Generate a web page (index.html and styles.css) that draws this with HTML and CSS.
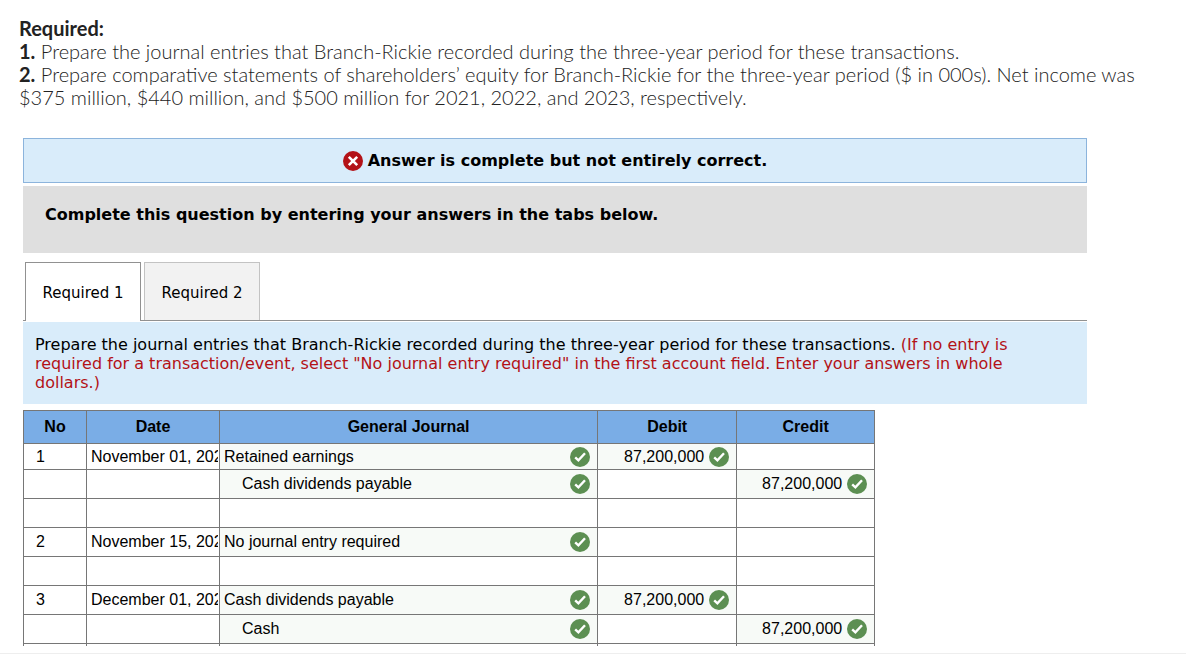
FILE: index.html
```html
<!DOCTYPE html>
<html lang="en">
  <head>
    <meta charset="UTF-8" />
    <meta name="viewport" content="width=device-width, initial-scale=1.0" />
    <title>Journal Entries</title>
    <link rel="stylesheet" href="styles.css">
  </head>
  <body>
    <svg class="symbols" aria-hidden="true">
      <symbol id="check" viewBox="0 0 20 20">
        <circle cx="10" cy="10" r="10" fill="#5c8f52" />
        <path d="M5.2 10.3 L8.4 13.3 L15 6.2" fill="none" stroke="#fff" stroke-width="2.4" />
      </symbol>
      <symbol id="cross" viewBox="0 0 20 20">
        <circle cx="10" cy="10" r="10" fill="#b31217" />
        <path d="M5.8 5.8 L14.2 14.2 M14.2 5.8 L5.8 14.2" fill="none" stroke="#fff" stroke-width="2.6" />
      </symbol>
    </svg>
    <div class="question">
      <div><b>Required:</b></div>
      <div><b>1.</b> Prepare the journal entries that Branch-Rickie recorded during the three-year period for these transactions.</div>
      <div><b>2.</b> Prepare comparative statements of shareholders’ equity for Branch-Rickie for the three-year period ($ in 000s). Net income was $375 million, $440 million, and $500 million for 2021, 2022, and 2023, respectively.</div>
    </div>
    <div class="answer">
      <div class="status">
        <svg class="icon"><use href="#cross" /></svg>
        <span>Answer is complete but not entirely correct.</span>
      </div>
      <div class="instruction">Complete this question by entering your answers in the tabs below.</div>
      <div class="tabs" role="tablist">
        <button type="button" role="tab" aria-selected="true" class="tab active">Required 1</button>
        <button type="button" role="tab" aria-selected="false" class="tab">Required 2</button>
      </div>
      <div class="prompt">
        Prepare the journal entries that Branch-Rickie recorded during the three-year period for these transactions.
        <span class="note">(If no entry is required for a transaction/event, select "No journal entry required" in the first account field. Enter your answers in whole dollars.)</span>
      </div>
      <table class="journal">
        <colgroup>
          <col class="col-no" />
          <col class="col-date" />
          <col />
          <col class="col-debit" />
          <col class="col-credit" />
        </colgroup>
        <thead>
          <tr>
            <th>No</th>
            <th>Date</th>
            <th>General Journal</th>
            <th>Debit</th>
            <th>Credit</th>
          </tr>
        </thead>
        <tbody>
          <tr class="first">
            <td class="no">1</td>
            <td class="date"><div>November 01, 2021</div></td>
            <td class="filled"><div class="entry"><span>Retained earnings</span><svg class="icon"><use href="#check" /></svg></div></td>
            <td class="filled"><div class="amount"><span>87,200,000</span><svg class="icon"><use href="#check" /></svg></div></td>
            <td></td>
          </tr>
          <tr>
            <td></td>
            <td></td>
            <td class="filled"><div class="entry indent"><span>Cash dividends payable</span><svg class="icon"><use href="#check" /></svg></div></td>
            <td></td>
            <td class="filled"><div class="amount"><span>87,200,000</span><svg class="icon"><use href="#check" /></svg></div></td>
          </tr>
          <tr>
            <td></td>
            <td></td>
            <td></td>
            <td></td>
            <td></td>
          </tr>
          <tr>
            <td class="no">2</td>
            <td class="date"><div>November 15, 2021</div></td>
            <td class="filled"><div class="entry"><span>No journal entry required</span><svg class="icon"><use href="#check" /></svg></div></td>
            <td></td>
            <td></td>
          </tr>
          <tr>
            <td></td>
            <td></td>
            <td></td>
            <td></td>
            <td></td>
          </tr>
          <tr>
            <td class="no">3</td>
            <td class="date"><div>December 01, 2021</div></td>
            <td class="filled"><div class="entry"><span>Cash dividends payable</span><svg class="icon"><use href="#check" /></svg></div></td>
            <td class="filled"><div class="amount"><span>87,200,000</span><svg class="icon"><use href="#check" /></svg></div></td>
            <td></td>
          </tr>
          <tr>
            <td></td>
            <td></td>
            <td class="filled"><div class="entry indent"><span>Cash</span><svg class="icon"><use href="#check" /></svg></div></td>
            <td></td>
            <td class="filled"><div class="amount"><span>87,200,000</span><svg class="icon"><use href="#check" /></svg></div></td>
          </tr>
          <tr class="more">
            <td></td>
            <td></td>
            <td></td>
            <td></td>
            <td></td>
          </tr>
        </tbody>
      </table>
    </div>
    <hr class="divider" />
  </body>
</html>
```
FILE: styles.css
```css
* {
  box-sizing: border-box;
}
body {
  margin: 0;
  background: #fff;
  color: #000;
  font-family: Verdana, "DejaVu Sans", sans-serif;
  font-size: 16px;
}
.symbols {
  display: none;
}
.icon {
  flex: none;
  width: 20px;
  height: 20px;
}
.question {
  padding: 17px 19px 29px;
  color: #222;
  font-family: Lato, sans-serif;
  font-size: 20px;
  font-weight: 300;
  line-height: 23px;
}
.question b {
  font-weight: 700;
}
.answer {
  margin: 0 99px 0 23px;
}
.status {
  display: flex;
  align-items: center;
  justify-content: center;
  gap: 5px;
  height: 45px;
  background: #d9ecfa;
  border: 1px solid #8cb4dc;
  font-weight: bold;
}
.instruction {
  margin-top: 3px;
  padding: 19px 22px 28px;
  background: #dfdfdf;
  font-weight: bold;
  line-height: 20px;
}
.tabs {
  display: flex;
  gap: 3px;
  margin-top: 9px;
  padding-left: 2px;
  border-bottom: 1px solid #919191;
}
.tab {
  width: 116px;
  height: 58px;
  padding: 2px 0 0;
  background: #f2f2f2;
  border: 1px solid #c3c3c3;
  border-bottom: 0;
  color: #000;
  font-family: inherit;
  font-size: 15px;
  cursor: pointer;
}
.tab.active {
  height: 59px;
  margin-bottom: -1px;
  background: #fff;
  border-color: #919191;
}
.prompt {
  margin-top: 1px;
  padding: 13px 48px 12px 12px;
  background: #d9ecfa;
  line-height: 19px;
}
.note {
  color: #b31217;
}
.journal {
  width: calc(80% + 1px);
  margin-top: 6px;
  border-collapse: collapse;
  table-layout: fixed;
  font-family: Arial, "Liberation Sans", sans-serif;
  font-size: 16px;
}
.col-no {
  width: 63px;
}
.col-date {
  width: 133px;
}
.col-debit {
  width: 139px;
}
.col-credit {
  width: 138px;
}
th,
td {
  height: 29px;
  padding: 0;
  border: 1px solid #767676;
}
th {
  height: 33px;
  background: #7aade6;
}
.first td {
  height: 26px;
}
.no {
  padding-left: 12px;
}
.date div {
  margin: 0 1px 0 4px;
  overflow: hidden;
  white-space: nowrap;
}
.filled {
  background: #f7faf7;
}
.entry,
.amount {
  display: flex;
  align-items: center;
  justify-content: space-between;
  padding: 0 7px 0 4px;
}
.indent {
  padding-left: 22px;
}
.amount {
  justify-content: flex-end;
  gap: 5px;
}
.more td {
  height: 2px;
  border-bottom: 0;
}
.divider {
  margin: 7px 0 0;
  border: 0;
  border-top: 1px solid #eee;
}
```
